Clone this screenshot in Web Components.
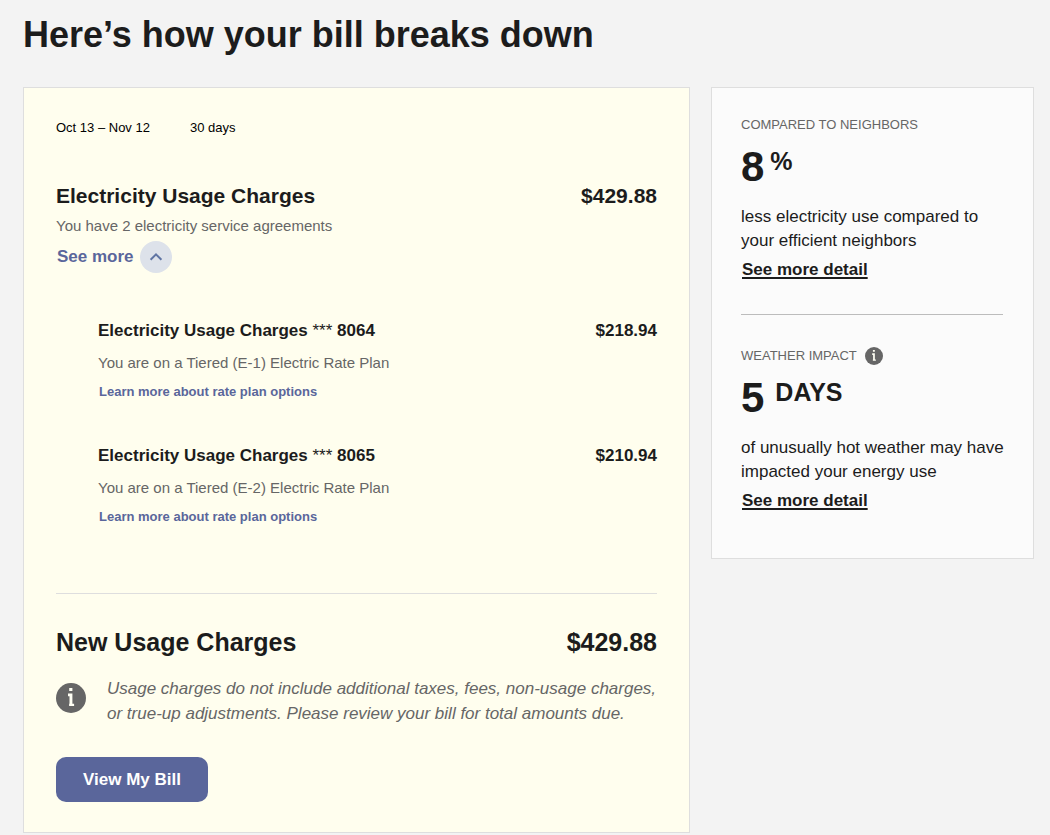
<!DOCTYPE html>
<html lang="en">
<head>
<meta charset="utf-8">
<meta name="viewport" content="width=device-width, initial-scale=1">
<title>Bill breakdown</title>
<style>
    body{
        margin: 0;
        background-color: #f3f3f3;
        color: #1c1c1c;
        font-family: "Liberation Sans", Arial, sans-serif;
        font-size: 17px;
    }
</style>
</head>
<body>
<bill-page>
    <span slot="title">Here’s how your bill breaks down</span>
    <bill-card period="Oct 13 – Nov 12" days="30 days">
        <charge-total name="Electricity Usage Charges" amount="$429.88"></charge-total>
        <agreement-list summary="You have 2 electricity service agreements">
            <agreement-item name="Electricity Usage Charges" account="8064" amount="$218.94">You are on a Tiered (E-1) Electric Rate Plan</agreement-item>
            <agreement-item name="Electricity Usage Charges" account="8065" amount="$210.94">You are on a Tiered (E-2) Electric Rate Plan</agreement-item>
        </agreement-list>
        <charge-total slot="total" size="large" name="New Usage Charges" amount="$429.88"></charge-total>
        <span slot="note">Usage charges do not include additional taxes, fees, non-usage charges, or true-up adjustments. Please review your bill for total amounts due.</span>
    </bill-card>
    <insight-card slot="side">
        <usage-insight label="COMPARED TO NEIGHBORS" value="8" unit="%">less electricity use compared to your efficient neighbors</usage-insight>
        <usage-insight label="WEATHER IMPACT" value="5" unit="DAYS" info>of unusually hot weather may have impacted your energy use</usage-insight>
    </insight-card>
</bill-page>

<script>
function makeTemplate(html){
    const template = document.createElement('template');
    template.innerHTML = html;
    return template;
}

// clones the template of the class and fills every [data-attr] node from the host's attributes
class BaseElement extends HTMLElement{
    constructor(){
        super();
        this.attachShadow({mode:"open"});
        this.shadowRoot.appendChild(this.constructor.template.content.cloneNode(true));
        this.shadowRoot.querySelectorAll('[data-attr]').forEach((node) => {
            node.textContent = this.getAttribute(node.dataset.attr);
        });
    }
}

class InfoIcon extends BaseElement{}
InfoIcon.template = makeTemplate(`
    <style>
    :host{
        display: block;
        flex: none;
        width: var(--icon-size, 18px);
        height: var(--icon-size, 18px);
    }
    svg{
        display: block;
        width: 100%;
        height: 100%;
    }
    </style>
    <svg viewBox="0 0 30 30" aria-hidden="true">
        <circle cx="15" cy="15" r="15" fill="#666"/>
        <path fill="#fffff4" d="M13.2 4.9h3.2v3.1h-3.2zM12 10.6h4.4v10.2h1.7v2.2h-5v-2.2h.4v-7.6H12z"/>
    </svg>
`);

class ChargeTotal extends BaseElement{}
ChargeTotal.template = makeTemplate(`
    <style>
    :host{
        display: flex;
        justify-content: space-between;
        gap: 16px;
        font-size: 21px;
        line-height: 28px;
    }
    :host([size="large"]){
        font-size: 25px;
        line-height: 32px;
    }
    h2, strong{
        margin: 0;
        font-size: inherit;
        font-weight: bold;
    }
    </style>
    <h2 data-attr="name"></h2>
    <strong data-attr="amount"></strong>
`);

class AgreementItem extends BaseElement{}
AgreementItem.template = makeTemplate(`
    <style>
    :host{
        display: block;
    }
    .row{
        display: flex;
        justify-content: space-between;
        gap: 16px;
        line-height: 24px;
    }
    h3{
        margin: 0;
        font-size: inherit;
    }
    .mask{
        font-weight: normal;
    }
    p{
        margin: 10px 0 9px;
        color: #666;
        font-size: 15px;
        line-height: 20px;
    }
    a{
        display: block;
        width: fit-content;
        padding: 0 1px;
        color: #5a669b;
        font-size: 13px;
        font-weight: bold;
        line-height: 20px;
        text-decoration: none;
    }
    </style>
    <div class="row">
        <h3><span data-attr="name"></span> <span class="mask">***</span> <span data-attr="account"></span></h3>
        <strong data-attr="amount"></strong>
    </div>
    <p><slot></slot></p>
    <a href="#rate-plans">Learn more about rate plan options</a>
`);

class AgreementList extends BaseElement{
    connectedCallback(){
        const button = this.shadowRoot.querySelector('button');
        const items = this.shadowRoot.querySelector('.items');
        button.onclick = () => {
            items.hidden = !items.hidden;
            button.setAttribute('aria-expanded', String(!items.hidden));
        }
    }
}
AgreementList.template = makeTemplate(`
    <style>
    :host{
        display: block;
    }
    p{
        margin: 6px 0 5px;
        color: #666;
        font-size: 15px;
        line-height: 20px;
    }
    button{
        display: flex;
        align-items: center;
        gap: 6px;
        padding: 0 1px;
        border: none;
        background: none;
        color: #5a669b;
        font: bold 17px/32px "Liberation Sans", Arial, sans-serif;
        cursor: pointer;
    }
    svg{
        display: block;
        width: 32px;
        height: 32px;
    }
    button[aria-expanded="false"] svg{
        transform: rotate(180deg);
    }
    .items{
        display: flex;
        flex-direction: column;
        gap: 42px;
        margin: 46px 0 0 42px;
    }
    .items[hidden]{
        display: none;
    }
    </style>
    <p data-attr="summary"></p>
    <button type="button" aria-expanded="true">See more
        <svg viewBox="0 0 32 32" aria-hidden="true">
            <circle cx="16" cy="16" r="16" fill="#dde2ea"/>
            <path d="M10.6 18.8 16 13.4l5.4 5.4" fill="none" stroke="#5f74a3" stroke-width="2"/>
        </svg>
    </button>
    <div class="items"><slot></slot></div>
`);

class BillCard extends BaseElement{}
BillCard.template = makeTemplate(`
    <style>
    :host{
        display: block;
        padding: 28px 32px 30px;
        border: 1px solid #dedede;
        background-color: #fffeee;
    }
    .period{
        display: flex;
        gap: 40px;
        margin-bottom: 42px;
        color: #000;
        font-size: 13px;
        line-height: 24px;
    }
    hr{
        margin: 66px 0 32px;
        border: none;
        border-top: 1px solid #dedede;
    }
    .note{
        display: flex;
        align-items: flex-start;
        gap: 21px;
        margin: 18px 0 31px;
        color: #666;
        font-style: italic;
        line-height: 25px;
    }
    .note info-icon{
        --icon-size: 30px;
        margin-top: 7px;
    }
    button{
        display: block;
        padding: 0 27px;
        border: none;
        border-radius: 10px;
        background-color: #5a669b;
        color: #fff;
        font: bold 17px/45px "Liberation Sans", Arial, sans-serif;
        cursor: pointer;
    }
    </style>
    <div class="period">
        <span data-attr="period"></span>
        <span data-attr="days"></span>
    </div>
    <slot></slot>
    <hr>
    <slot name="total"></slot>
    <div class="note">
        <info-icon></info-icon>
        <slot name="note"></slot>
    </div>
    <button type="button">View My Bill</button>
`);

class UsageInsight extends BaseElement{}
UsageInsight.template = makeTemplate(`
    <style>
    :host{
        display: block;
    }
    .label{
        display: flex;
        align-items: center;
        gap: 8px;
        color: #666;
        font-size: 13px;
        line-height: 20px;
    }
    :host(:not([info])) info-icon{
        display: none;
    }
    .value{
        display: flex;
        gap: 6px;
        margin: 11px 0 17px;
        font-size: 42px;
        font-weight: bold;
        line-height: 42px;
    }
    :host([info]) .value{
        gap: 11px;
    }
    .unit{
        font-size: 25px;
        line-height: 30px;
    }
    p{
        margin: 0 -4px 5px 0;
        line-height: 24px;
    }
    a{
        display: block;
        width: fit-content;
        padding: 0 1px;
        color: inherit;
        font-weight: bold;
        line-height: 24px;
        text-decoration: underline 2px;
        text-underline-offset: 2px;
    }
    </style>
    <div class="label"><span data-attr="label"></span><info-icon></info-icon></div>
    <div class="value"><span data-attr="value"></span><span class="unit" data-attr="unit"></span></div>
    <p><slot></slot></p>
    <a href="#detail">See more detail</a>
`);

class InsightCard extends BaseElement{}
InsightCard.template = makeTemplate(`
    <style>
    :host{
        display: block;
        padding: 27px 30px 45px 29px;
        border: 1px solid #dedede;
        background-color: #fbfbfb;
    }
    ::slotted(:not(:first-child)){
        margin-top: 32px;
        padding-top: 31px;
        border-top: 1px solid #bcbcbc;
    }
    </style>
    <slot></slot>
`);

class BillPage extends BaseElement{}
BillPage.template = makeTemplate(`
    <style>
    :host{
        display: block;
        padding: 14px 16px 2px 23px;
    }
    h1{
        margin: 0 0 31px;
        font-size: 36px;
        line-height: 42px;
    }
    .columns{
        display: grid;
        grid-template-columns: minmax(0, 1fr) 323px;
        align-items: start;
        gap: 21px;
    }
    @media (max-width: 760px){
        .columns{
            grid-template-columns: minmax(0, 1fr);
        }
    }
    </style>
    <h1><slot name="title"></slot></h1>
    <div class="columns">
        <main><slot></slot></main>
        <aside><slot name="side"></slot></aside>
    </div>
`);

window.customElements.define("info-icon", InfoIcon);
window.customElements.define("charge-total", ChargeTotal);
window.customElements.define("agreement-item", AgreementItem);
window.customElements.define("agreement-list", AgreementList);
window.customElements.define("bill-card", BillCard);
window.customElements.define("usage-insight", UsageInsight);
window.customElements.define("insight-card", InsightCard);
window.customElements.define("bill-page", BillPage);
</script>
</body>
</html>
